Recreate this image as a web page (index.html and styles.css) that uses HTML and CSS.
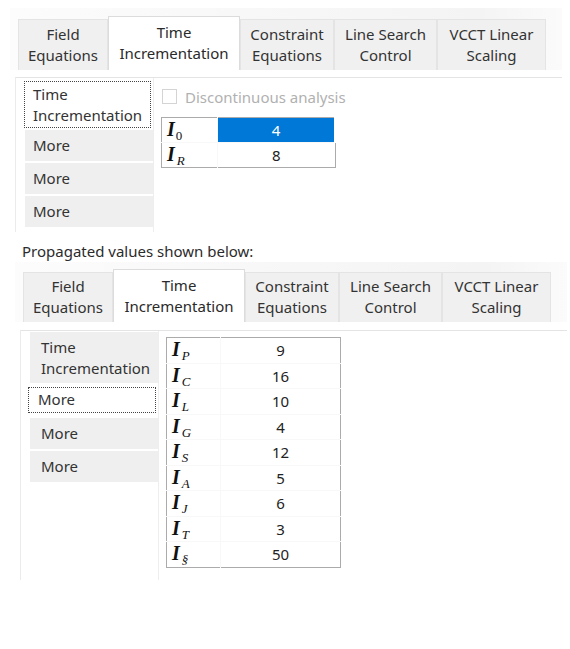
FILE: index.html
```html
<!DOCTYPE html>
<html>
<head>
<meta charset="utf-8">
<link rel="stylesheet" href="styles.css">
</head>
<body>
<div class="tw tw1">
  <div class="tabbar">
    <div class="tab w-field">Field<br>Equations</div>
    <div class="tab active w-time">Time<br>Incrementation</div>
    <div class="tab w-con">Constraint<br>Equations</div>
    <div class="tab w-line">Line Search<br>Control</div>
    <div class="tab w-vcct">VCCT Linear<br>Scaling</div>
  </div>
  <div class="pane pane1">
    <div class="side">
      <div class="item two focus">Time<br>Incrementation</div>
      <div class="item">More</div>
      <div class="item">More</div>
      <div class="item">More</div>
    </div>
    <div class="content">
      <div class="check"><span class="box"></span><span>Discontinuous analysis</span></div>
      <table class="grid">
        <tr><td class="lab"><i>I</i><sub class="up">0</sub></td><td class="val sel">4</td></tr>
        <tr><td class="lab"><i>I</i><sub>R</sub></td><td class="val">8</td></tr>
      </table>
    </div>
  </div>
</div>
<div class="caption">Propagated values shown below:</div>
<div class="tw tw2">
  <div class="tabbar">
    <div class="tab w-field">Field<br>Equations</div>
    <div class="tab active w-time">Time<br>Incrementation</div>
    <div class="tab w-con">Constraint<br>Equations</div>
    <div class="tab w-line">Line Search<br>Control</div>
    <div class="tab w-vcct">VCCT Linear<br>Scaling</div>
  </div>
  <div class="pane pane2">
    <div class="side">
      <div class="item two">Time<br>Incrementation</div>
      <div class="item focus">More</div>
      <div class="item">More</div>
      <div class="item">More</div>
    </div>
    <div class="content">
      <table class="grid">
        <tr><td class="lab"><i>I</i><sub>P</sub></td><td class="val">9</td></tr>
        <tr><td class="lab"><i>I</i><sub>C</sub></td><td class="val">16</td></tr>
        <tr><td class="lab"><i>I</i><sub>L</sub></td><td class="val">10</td></tr>
        <tr><td class="lab"><i>I</i><sub>G</sub></td><td class="val">4</td></tr>
        <tr><td class="lab"><i>I</i><sub>S</sub></td><td class="val">12</td></tr>
        <tr><td class="lab"><i>I</i><sub>A</sub></td><td class="val">5</td></tr>
        <tr><td class="lab"><i>I</i><sub>J</sub></td><td class="val">6</td></tr>
        <tr><td class="lab"><i>I</i><sub>T</sub></td><td class="val">3</td></tr>
        <tr><td class="lab"><i>I</i><sub>§</sub></td><td class="val">50</td></tr>
      </table>
    </div>
  </div>
</div>
</body>
</html>
```
FILE: styles.css
```css
* { box-sizing: border-box; }
body {
  margin: 0;
  background: #fff;
  font-family: "Noto Sans", "Open Sans", sans-serif;
  font-size: 15px;
  color: #2b2b2b;
}
.tw1 { margin: 8px 8px 0 10px; }
.tw2 { margin: 0 3px 0 15px; }

.tabbar {
  display: flex;
  align-items: flex-end;
  padding-left: 8px;
  background: linear-gradient(to right, #fcfcfc, #f4f4f4 85%, #fbfbfb);
}
.tw1 .tabbar { height: 62px; }
.tw2 .tabbar { height: 60px; }

.tab {
  height: 51px;
  background: #f0f0f0;
  border: 1px solid #e4e4e4;
  border-bottom: none;
  text-align: center;
  line-height: 21px;
  padding-top: 4px;
  color: #333;
}
.tw2 .tab { height: 50px; padding-top: 3px; }
.tab.active {
  height: 54px;
  background: #fff;
  border-color: #dcdcdc;
  padding-top: 5px;
  color: #2a2a2a;
}
.tw2 .tab.active { height: 53px; padding-top: 5px; }
.w-field { width: 90px; }
.w-time { width: 132px; }
.w-con { width: 94px; }
.w-line { width: 103px; }
.w-vcct { width: 109px; }

.pane {
  display: flex;
  margin-left: 5px;
  margin-top: 7px;
  border-top: 1px solid #e4e4e4;
  border-left: 1px solid #ebebeb;
}
.pane1 { height: 155px; }
.pane2 { margin-top: 8px; height: 250px; }

.side {
  width: 138px;
  padding-left: 9px;
  border-right: 1px solid #eeeeee;
  display: flex;
  flex-direction: column;
}
.pane1 .side { padding-top: 2px; }
.pane2 .side { padding-top: 1px; }

.item {
  background: #efefef;
  height: 31px;
  line-height: 31px;
  padding-left: 8px;
  margin-top: 2px;
  color: #333;
}
.item.two {
  height: 47px;
  line-height: 21px;
  padding-top: 2px;
}
.pane2 .item.two { height: 51px; padding-top: 5px; padding-left: 11px; margin-top: 0; }
.item.focus {
  background: #fff;
  border: 1px dotted #444;
  margin-left: -1px;
  margin-right: 2px;
}
.pane1 .item.focus { margin-top: 1px; }
.pane2 .item { margin-top: 2px; padding-left: 11px; }
.pane2 .item.focus {
  height: 26px;
  line-height: 23px;
  margin-left: -2px;
  margin-right: 2px;
  margin-top: 4px;
  padding-left: 9px;
}
.pane2 .item.focus + .item { margin-top: 5px; }

.content { flex: 1; }
.pane1 .content { padding: 10px 0 0 8px; }
.pane2 .content { padding: 6px 0 0 7px; }

.check {
  display: flex;
  align-items: center;
  height: 17px;
  color: #b1b1b1;
}
.box {
  width: 15px;
  height: 15px;
  border: 1px solid #d4d4d4;
  background: #fff;
  margin-right: 8px;
}

.grid {
  border-collapse: collapse;
  border: 1px solid #ababab;
  background: #fff;
}
.pane1 .grid { margin: 12px 0 0 -1px; width: 175px; }
.pane2 .grid { width: 175px; }
.grid td {
  padding: 0;
  line-height: 18px;
  border-bottom: 1px solid #f8f8f8;
}
.grid tr:last-child td { border-bottom: none; }
.pane1 .grid td { height: 25px; }
.pane2 .grid td { height: 25.5px; }
.lab {
  width: 56px;
  padding-left: 5px !important;
  border-right: 1px solid #f8f8f8;
  font-family: "Liberation Serif", "DejaVu Serif", serif;
  color: #111;
  white-space: nowrap;
}
.pane2 .lab { width: 54px; }
.lab i {
  font-weight: bold;
  font-style: italic;
  font-size: 20px;
  line-height: 18px;
}
.lab sub {
  font-style: italic;
  font-size: 13px;
  line-height: 0;
  vertical-align: -4px;
  margin-left: 2px;
}
.lab sub.up { font-style: normal; margin-left: 1px; }
.val {
  text-align: center;
  color: #222;
}
.val.sel {
  background: #0078d7;
  color: #fff;
}
.pane1 .grid tr:first-child td.val.sel { border-right: 2px solid #fff; }

.caption {
  margin: 8px 0 0 22px;
  height: 22px;
  line-height: 22px;
  color: #2b2b2b;
}
```
